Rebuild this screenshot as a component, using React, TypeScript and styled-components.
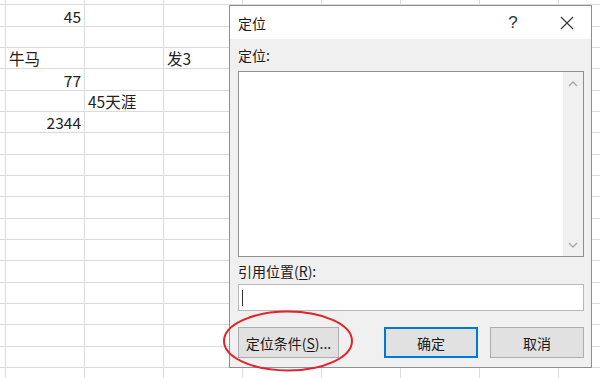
import React from "react";
import styled, { createGlobalStyle } from "styled-components";

const Global = createGlobalStyle`
  html, body { margin: 0; padding: 0; background: #fff; }
  body { width: 600px; height: 378px; overflow: hidden; font-family: "Noto Sans CJK SC", "Noto Sans", sans-serif; }
`;

const Page = styled.div`
  position: relative;
  width: 600px;
  height: 378px;
  overflow: hidden;
`;

const Sheet = styled.div`
  display: grid;
  grid-template-columns: 5px repeat(8, 78px);
  grid-template-rows: 4.33px repeat(18, 20.33px);
  gap: 1px;
  background: #dadada;
  width: 640px;
`;

const Cell = styled.div<{ $align?: "left" | "right" }>`
  background: #fff;
  display: flex;
  align-items: flex-end;
  justify-content: ${(p) => (p.$align === "right" ? "flex-end" : "flex-start")};
  padding: ${(p) => (p.$align === "right" ? "0 3px 0 0" : "0 0 0 3px")};
  font-family: "Noto Sans CJK SC", sans-serif;
  font-size: 15.5px;
  line-height: 20px;
  color: #222;
  white-space: nowrap;
  overflow: visible;
  min-width: 0;
`;

const Dialog = styled.div`
  position: absolute;
  left: 229px;
  top: 5px;
  width: 361px;
  height: 361px;
  border: 1px solid #8e8e8e;
  background: #f0f0f0;
  display: flex;
  flex-direction: column;
  font-family: "Noto Sans CJK SC", sans-serif;
  color: #1a1a1a;
  font-size: 14px;
`;

const TitleBar = styled.div`
  height: 33px;
  background: #fff;
  display: flex;
  align-items: center;
  padding-left: 8px;
`;

const Title = styled.div`
  flex: 1;
  font-size: 14px;
`;

const Help = styled.div`
  width: 30px;
  text-align: center;
  font-size: 17px;
  font-family: "Liberation Sans", sans-serif;
  color: #333;
  margin-right: 24px;
`;

const Close = styled.div`
  width: 30px;
  height: 33px;
  display: flex;
  align-items: center;
  justify-content: center;
  margin-right: 9px;
`;

const Body = styled.div`
  flex: 1;
  display: flex;
  flex-direction: column;
  padding: 0 7px 0 8px;
`;

const Label = styled.div<{ $h: number }>`
  height: ${(p) => p.$h}px;
  display: flex;
  align-items: center;
  font-size: 14px;
  line-height: 1;
`;

const ListBox = styled.div`
  height: 184px;
  border: 1px solid #8f8f8f;
  background: #fff;
  display: flex;
  justify-content: flex-end;
`;

const ScrollBar = styled.div`
  width: 20px;
  background: #f0f0f0;
  display: flex;
  flex-direction: column;
  justify-content: space-between;
  align-items: center;
  padding: 9px 0 8px;
`;

const Input = styled.div`
  height: 25px;
  border: 1px solid #b8b8b8;
  background: #fff;
  display: flex;
  align-items: center;
  padding-left: 3px;
`;

const Caret = styled.div`
  width: 1px;
  height: 16px;
  background: #333;
`;

const Buttons = styled.div`
  display: flex;
  margin-top: 16px;
  align-items: center;
`;

const Group = styled.div`
  margin-left: auto;
  display: flex;
  gap: 12px;
`;

const Button = styled.div<{ $w: number; $primary?: boolean }>`
  width: ${(p) => p.$w}px;
  height: 31px;
  box-sizing: border-box;
  background: #e1e1e1;
  border: ${(p) => (p.$primary ? "2px solid #0078d7" : "1px solid #adadad")};
  display: flex;
  align-items: center;
  justify-content: center;
  font-size: 14px;
  color: #1a1a1a;
`;

const Ring = styled.svg`
  position: absolute;
  left: 220px;
  top: 307px;
`;

const U = styled.span`
  text-decoration: underline;
  text-underline-offset: 2px;
`;

const rows: Record<number, Record<number, { t: string; a?: "left" | "right" }>> = {
  1: { 1: { t: "45", a: "right" } },
  3: { 1: { t: "牛马" }, 3: { t: "发3" } },
  4: { 1: { t: "77", a: "right" } },
  5: { 2: { t: "45天涯" } },
  6: { 1: { t: "2344", a: "right" } },
};

export default function App() {
  const cells: React.ReactNode[] = [];
  for (let r = 0; r < 19; r++) {
    for (let c = 0; c < 9; c++) {
      const d = rows[r]?.[c];
      cells.push(
        <Cell key={`${r}-${c}`} $align={d?.a}>
          {d?.t}
        </Cell>
      );
    }
  }
  return (
    <Page>
      <Global />
      <Sheet>{cells}</Sheet>
      <Dialog>
        <TitleBar>
          <Title>定位</Title>
          <Help>?</Help>
          <Close>
            <svg width="14" height="14" viewBox="0 0 14 14">
              <path d="M1 1 L13 13 M13 1 L1 13" stroke="#333" strokeWidth="1.1" fill="none" />
            </svg>
          </Close>
        </TitleBar>
        <Body>
          <Label $h={32}>定位:</Label>
          <ListBox>
            <ScrollBar>
              <svg width="10" height="6" viewBox="0 0 10 6">
                <path d="M1 5 L5 1 L9 5" stroke="#a6a6a6" strokeWidth="1.3" fill="none" />
              </svg>
              <svg width="10" height="6" viewBox="0 0 10 6">
                <path d="M1 1 L5 5 L9 1" stroke="#a6a6a6" strokeWidth="1.3" fill="none" />
              </svg>
            </ScrollBar>
          </ListBox>
          <Label $h={27}>
            引用位置(<U>R</U>):
          </Label>
          <Input>
            <Caret />
          </Input>
          <Buttons>
            <Button $w={101}>
              定位条件(<U>S</U>)...
            </Button>
            <Group>
              <Button $w={94} $primary>
                确定
              </Button>
              <Button $w={94}>取消</Button>
            </Group>
          </Buttons>
        </Body>
      </Dialog>
      <Ring width="136" height="68" viewBox="0 0 136 68">
        <ellipse cx="68" cy="34" rx="64" ry="29.5" fill="none" stroke="#e3222b" strokeWidth="2" />
      </Ring>
    </Page>
  );
}
